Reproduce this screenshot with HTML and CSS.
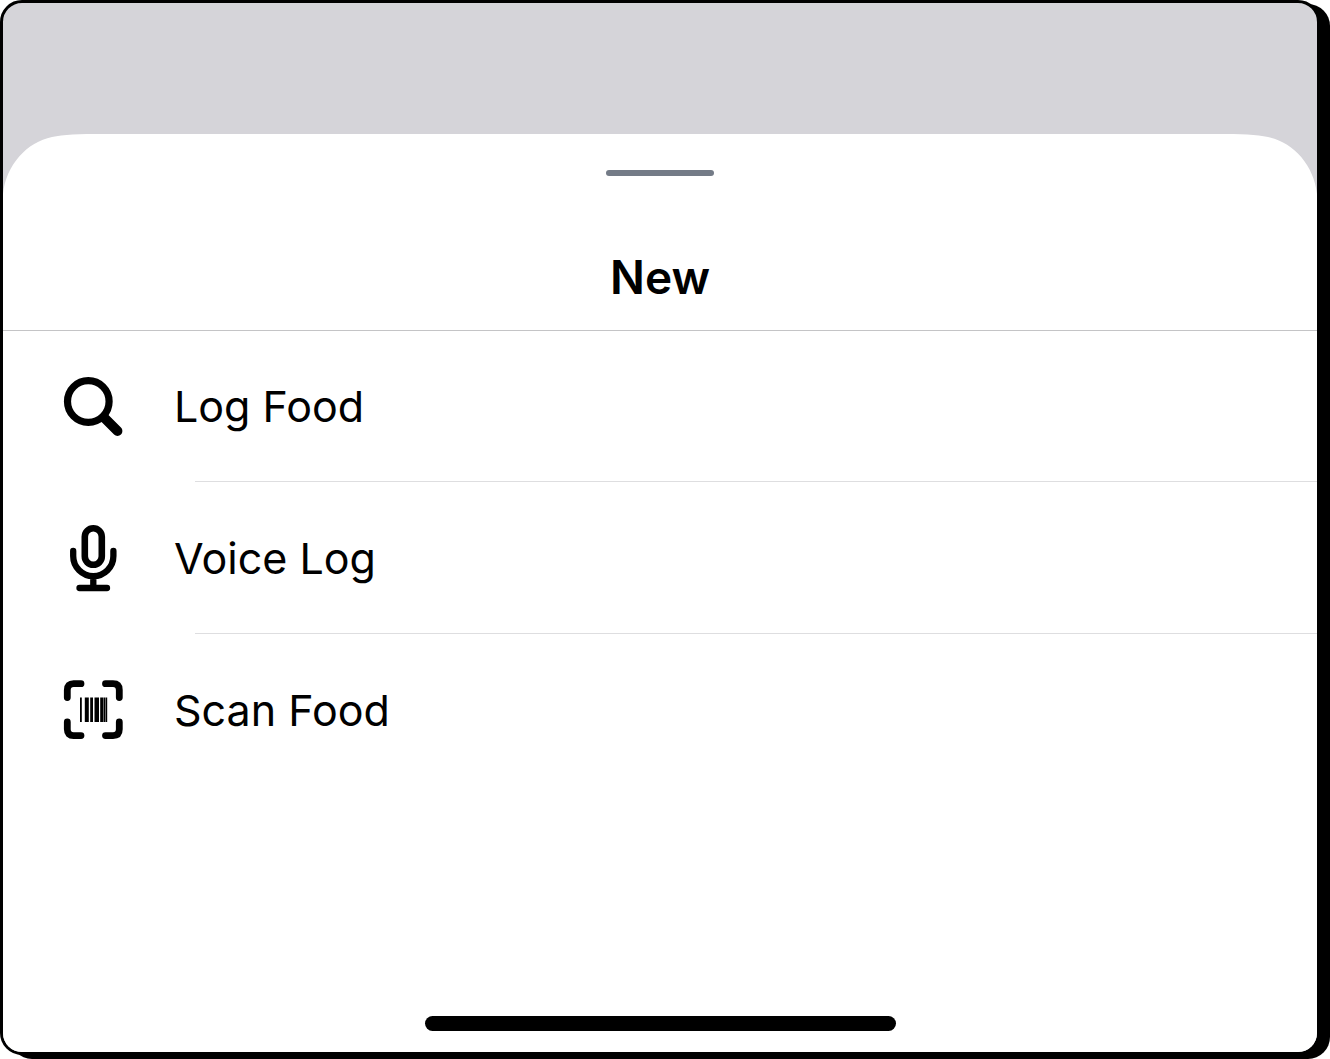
FILE: index.html
```html
<!DOCTYPE html>
<html lang="en">
<head>
<meta charset="utf-8">
<meta name="viewport" content="width=device-width, initial-scale=1">
<title>New</title>
<link rel="stylesheet" href="styles.css">
</head>
<body>
<main class="screen">
  <section class="sheet" aria-labelledby="sheet-title">
    <svg class="corner corner-left" viewBox="0 0 100 60" aria-hidden="true"><path d="M0 0H100C76 0 60 .5 49 3C24 8 3 31 0 60Z"/></svg>
    <svg class="corner corner-right" viewBox="0 0 100 60" aria-hidden="true"><path d="M100 0H0C24 0 40 .5 51 3C76 8 97 31 100 60Z"/></svg>
    <header class="sheet-header">
      <span class="grabber"></span>
      <h1 class="title" id="sheet-title">New</h1>
    </header>
    <ul class="actions">
      <li class="action-item">
        <button class="action" type="button">
          <svg class="icon" viewBox="0 0 72 72" aria-hidden="true">
            <circle cx="31.3" cy="31.5" r="20.8" stroke-width="7.2"/>
            <path d="M47 47.500L60.500 61" stroke-width="9.800"/>
          </svg>
          <span>Log Food</span>
        </button>
      </li>
      <li class="action-item">
        <button class="action" type="button">
          <svg class="icon" viewBox="0 0 72 72" aria-hidden="true">
            <rect x="27.800" y="6.300" width="17" height="36.500" rx="8.500" stroke-width="6.600"/>
            <path d="M16.200 29v5a20.100 20.100 0 0 0 40.200 0v-5M36.300 55v11M22.500 66h27.500" stroke-width="6.300"/>
          </svg>
          <span>Voice Log</span>
        </button>
      </li>
      <li class="action-item">
        <button class="action" type="button">
          <svg class="icon" viewBox="0 0 72 72" aria-hidden="true">
            <path d="M10.300 23.500v-7.500q0-6.300 6.300-6.300h7.400M48.500 9.700h7.500q6.300 0 6.300 6.300v7.500M62.300 48v7.300q0 6.300-6.300 6.300h-7.500M24 61.600h-7.400q-6.300 0-6.300-6.300v-7.300" stroke-width="6.800"/>
            <path class="bars" d="M23 23.500h1.800v24.500H23zM27.800 23.500h4v24.500h-4zM33.200 23.500h2.800v24.500h-2.800zM37.500 23.500h4.500v24.500h-4.500zM43.200 23.500h3.300v24.500h-3.300zM46.900 23.500h1.600v24.500h-1.600zM48.900 23.500h1.300v24.500h-1.300z"/>
          </svg>
          <span>Scan Food</span>
        </button>
      </li>
    </ul>
    <span class="home-indicator"></span>
  </section>
</main>
</body>
</html>
```
FILE: styles.css
```css
* {
  box-sizing: border-box;
}

body {
  margin: 0;
  min-height: 100vh;
  padding: 0 10px 4px 0;
  display: flex;
  background: #fff;
  color: #000;
  font-family: Inter, "Liberation Sans", sans-serif;
}

.screen {
  flex: 1;
  display: flex;
  padding-top: 131px;
  overflow: hidden;
  border: 3px solid #000;
  border-radius: 22px;
  background: #d5d4d9;
  box-shadow: 10px 4px 0 #000;
}

.sheet {
  position: relative;
  flex: 1;
  display: flex;
  flex-direction: column;
  background: #fff;
}

/* Smooth shoulders of the sheet, cut out in the backdrop colour */
.corner {
  position: absolute;
  top: 0;
  width: 100px;
  height: 60px;
  fill: #d5d4d9;
}

.corner-left {
  left: 0;
}

.corner-right {
  right: 0;
}

.sheet-header {
  display: flex;
  flex-direction: column;
  align-items: center;
  gap: 72px;
  padding: 36px 0 24px;
  box-shadow: 0 1px 0 #c4c4c6;
}

.grabber {
  width: 108px;
  height: 6px;
  border-radius: 3px;
  background: #747b87;
}

.title {
  margin: 0;
  font-size: 46px;
  font-weight: 600;
  line-height: 58px;
}

.actions {
  margin: 0;
  padding: 0;
  list-style: none;
}

.action-item {
  position: relative;
}

.action-item:not(:last-child)::after {
  content: "";
  position: absolute;
  right: 0;
  bottom: 0;
  left: 192px;
  height: 1px;
  background: #dedee0;
}

.action {
  display: flex;
  align-items: center;
  gap: 45px;
  width: 100%;
  height: 152px;
  padding: 0 54px;
  border: 0;
  background: none;
  color: inherit;
  font: inherit;
  font-size: 43px;
  line-height: 56px;
  text-align: left;
}

.icon {
  flex: none;
  width: 72px;
  height: 72px;
  fill: none;
  stroke: #000;
  stroke-linecap: round;
}

.bars {
  fill: #000;
  stroke: none;
}

.home-indicator {
  align-self: center;
  width: 471px;
  height: 15px;
  margin: auto 0 21px;
  border-radius: 8px;
  background: #000;
}
```
